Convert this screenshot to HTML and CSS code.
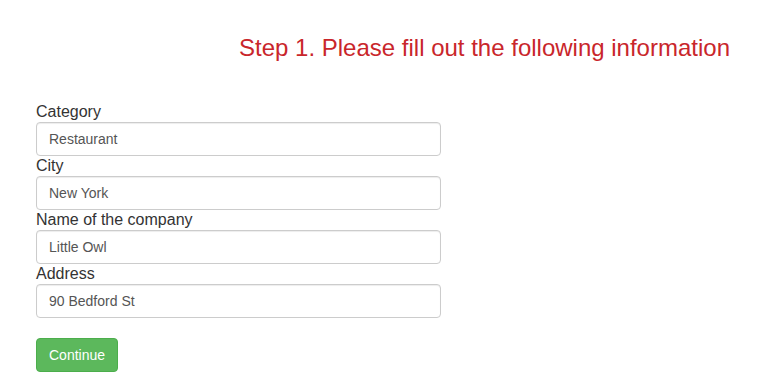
FILE: index.html
```html
<!DOCTYPE html>
<html lang="en">
<head>
<meta charset="utf-8">
<title>Step 1</title>
<link rel="stylesheet" href="styles.css">
</head>
<body>
<div class="page">
  <h2 class="step-title">Step 1. Please fill out the following information</h2>
  <form class="info-form">
    <div class="form-group">
      <label class="field-label" for="category">Category</label>
      <input class="form-control" id="category" type="text" value="Restaurant">
    </div>
    <div class="form-group">
      <label class="field-label" for="city">City</label>
      <input class="form-control" id="city" type="text" value="New York">
    </div>
    <div class="form-group">
      <label class="field-label" for="company">Name of the company</label>
      <input class="form-control" id="company" type="text" value="Little Owl">
    </div>
    <div class="form-group">
      <label class="field-label" for="address">Address</label>
      <input class="form-control" id="address" type="text" value="90 Bedford St">
    </div>
    <button class="btn-success" type="button">Continue</button>
  </form>
</div>
</body>
</html>
```
FILE: styles.css
```css
* { box-sizing: border-box; }
html, body { margin: 0; padding: 0; background: #fff; }
body {
  font-family: "Liberation Sans", Arial, Helvetica, sans-serif;
  color: #333;
  font-size: 14px;
}
.page {
  padding: 35px 30px 0 36px;
}
.step-title {
  margin: 0;
  font-size: 24px;
  line-height: 26px;
  font-weight: normal;
  color: #c9262b;
  text-align: right;
}
.info-form {
  margin-top: 41px;
  width: 405px;
  display: flex;
  flex-direction: column;
}
.form-group {
  display: flex;
  flex-direction: column;
}
.field-label {
  font-size: 16px;
  line-height: 20px;
  color: #333;
}
.form-control {
  display: block;
  width: 405px;
  height: 34px;
  padding: 6px 12px;
  font-family: "Liberation Sans", Arial, Helvetica, sans-serif;
  font-size: 14px;
  line-height: 20px;
  color: #555;
  background: #fff;
  border: 1px solid #ccc;
  border-radius: 4px;
  box-shadow: inset 0 1px 1px rgba(0,0,0,0.075);
  outline: none;
}
.btn-success {
  align-self: flex-start;
  margin-top: 20px;
  height: 34px;
  padding: 6px 12px;
  font-family: "Liberation Sans", Arial, Helvetica, sans-serif;
  font-size: 14px;
  line-height: 20px;
  color: #fff;
  background: #5cb85c;
  border: 1px solid #4cae4c;
  border-radius: 4px;
}
```
